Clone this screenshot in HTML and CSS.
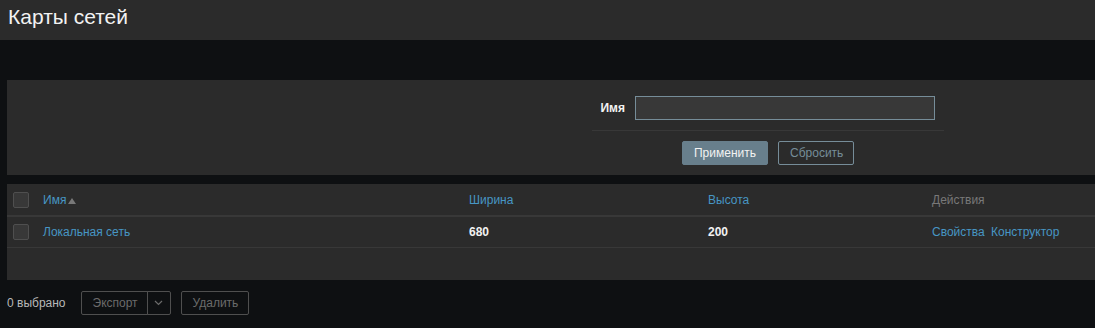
FILE: index.html
```html
<!DOCTYPE html>
<html lang="ru">
<head>
    <meta charset="UTF-8">
    <title>Карты сетей</title>
    <link rel="stylesheet" href="styles.css">
</head>
<body>
    <header class="page-header">
        <h1>Карты сетей</h1>
    </header>

    <main class="content">
        <div class="filter-box">
            <form class="filter-form">
                <div class="filter-row">
                    <label for="filter-name">Имя</label>
                    <input type="text" id="filter-name">
                </div>
                <div class="filter-buttons">
                    <button type="button" class="btn btn-apply">Применить</button>
                    <button type="button" class="btn btn-alt">Сбросить</button>
                </div>
            </form>
        </div>

        <div class="list-box">
            <table class="list-table">
                <thead>
                    <tr>
                        <th class="col-check"><span class="checkbox"></span></th>
                        <th class="col-name"><a href="#">Имя</a><span class="arrow-up"></span></th>
                        <th class="col-width"><a href="#">Ширина</a></th>
                        <th class="col-height"><a href="#">Высота</a></th>
                        <th class="col-actions">Действия</th>
                    </tr>
                </thead>
                <tbody>
                    <tr>
                        <td class="col-check"><span class="checkbox"></span></td>
                        <td><a href="#">Локальная сеть</a></td>
                        <td class="num">680</td>
                        <td class="num">200</td>
                        <td><a href="#" class="link-action">Свойства</a> <a href="#">Конструктор</a></td>
                    </tr>
                </tbody>
            </table>
        </div>

        <div class="action-buttons">
            <span class="selected-count">0 выбрано</span>
            <div class="btn-split">
                <button type="button" class="btn btn-disabled">Экспорт</button>
                <button type="button" class="btn btn-disabled btn-toggle">
                    <svg width="9" height="6" viewBox="0 0 9 6"><path d="M1 1 L4.5 4.5 L8 1" fill="none" stroke="#6b6b6b" stroke-width="1.2"/></svg>
                </button>
            </div>
            <button type="button" class="btn btn-disabled">Удалить</button>
        </div>
    </main>
</body>
</html>
```

FILE: styles.css
```css
html {
    overflow: hidden;
}
body {
    margin: 0;
    width: 1300px;
    background-color: #0e1012;
    color: #f2f2f2;
    font-family: Arial, "Liberation Sans", sans-serif;
    font-size: 12px;
}
a {
    color: #4796c4;
    text-decoration: none;
}
.page-header {
    height: 40px;
    background: #2b2b2b;
    padding: 0 8px;
    display: flex;
    align-items: center;
}
.page-header h1 {
    margin: 0;
    font-size: 21px;
    font-weight: normal;
    color: #f2f2f2;
    position: relative;
    top: -3px;
}
.content {
    padding: 40px 0 0 7px;
}
.filter-box {
    background: #2b2b2b;
    height: 95px;
    box-sizing: border-box;
    padding-top: 16px;
}
.filter-form {
    margin-left: 585px;
    width: 352px;
}
.filter-row {
    display: flex;
    align-items: center;
    justify-content: flex-end;
    gap: 10px;
    padding-right: 9px;
    padding-bottom: 10px;
    border-bottom: 1px solid #383838;
}
.filter-row label {
    font-weight: bold;
    color: #f2f2f2;
}
.filter-row input {
    width: 300px;
    height: 24px;
    box-sizing: border-box;
    background: #383838;
    border: 1px solid #768d99;
    color: #f2f2f2;
    margin: 0;
}
.filter-buttons {
    display: flex;
    justify-content: center;
    gap: 10px;
    padding-top: 10px;
}
.btn {
    height: 24px;
    padding: 0 11px;
    border-radius: 2px;
    font-family: Arial, "Liberation Sans", sans-serif;
    font-size: 12px;
    box-sizing: border-box;
    cursor: pointer;
}
.btn-apply {
    background: #687f8c;
    border: 1px solid #687f8c;
    color: #f2f2f2;
}
.btn-alt {
    background: transparent;
    border: 1px solid #768d99;
    color: #768d99;
    width: 76px;
}
.list-box {
    background: #2b2b2b;
    margin-top: 9px;
    height: 96px;
}
.list-table {
    width: 100%;
    border-collapse: collapse;
    table-layout: fixed;
}
.list-table th,
.list-table td {
    text-align: left;
    padding: 0;
    white-space: nowrap;
}
.list-table th {
    height: 31px;
    font-weight: normal;
    border-bottom: 2px solid #383838;
}
.list-table td {
    height: 30px;
    border-bottom: 1px solid #383838;
}
.list-table .col-check {
    width: 36px;
    padding-left: 6px;
    box-sizing: border-box;
}
.list-table .col-name {
    width: 426px;
}
.list-table .col-width {
    width: 239px;
}
.list-table .col-height {
    width: 224px;
}
.list-table .col-actions {
    color: #787878;
}
.link-action {
    margin-right: 3px;
}
.checkbox {
    display: block;
    width: 14px;
    height: 14px;
    border: 1px solid #4f4f4f;
    border-radius: 2px;
    background: #383838;
}
.arrow-up {
    display: inline-block;
    width: 0;
    height: 0;
    margin-left: 2px;
    border-left: 4px solid transparent;
    border-right: 4px solid transparent;
    border-bottom: 6px solid #787878;
}
.num {
    font-weight: bold;
}
.action-buttons {
    display: flex;
    align-items: center;
    height: 24px;
    margin-top: 11px;
}
.selected-count {
    color: #b8b8b8;
    margin-right: 15px;
}
.btn-disabled {
    background: transparent;
    border: 1px solid #4f4f4f;
    color: #6b6b6b;
    width: 68px;
}
.btn-split {
    display: flex;
    margin-right: 10px;
}
.btn-split .btn-disabled:first-child {
    width: 67px;
    border-radius: 2px 0 0 2px;
}
.btn-toggle {
    width: 23px;
    padding: 0;
    border-left: 1px solid #4f4f4f;
    border-radius: 0 2px 2px 0;
    display: flex;
    align-items: center;
    justify-content: center;
}
.btn-split .btn-toggle {
    margin-left: -1px;
    width: 24px;
}
```
